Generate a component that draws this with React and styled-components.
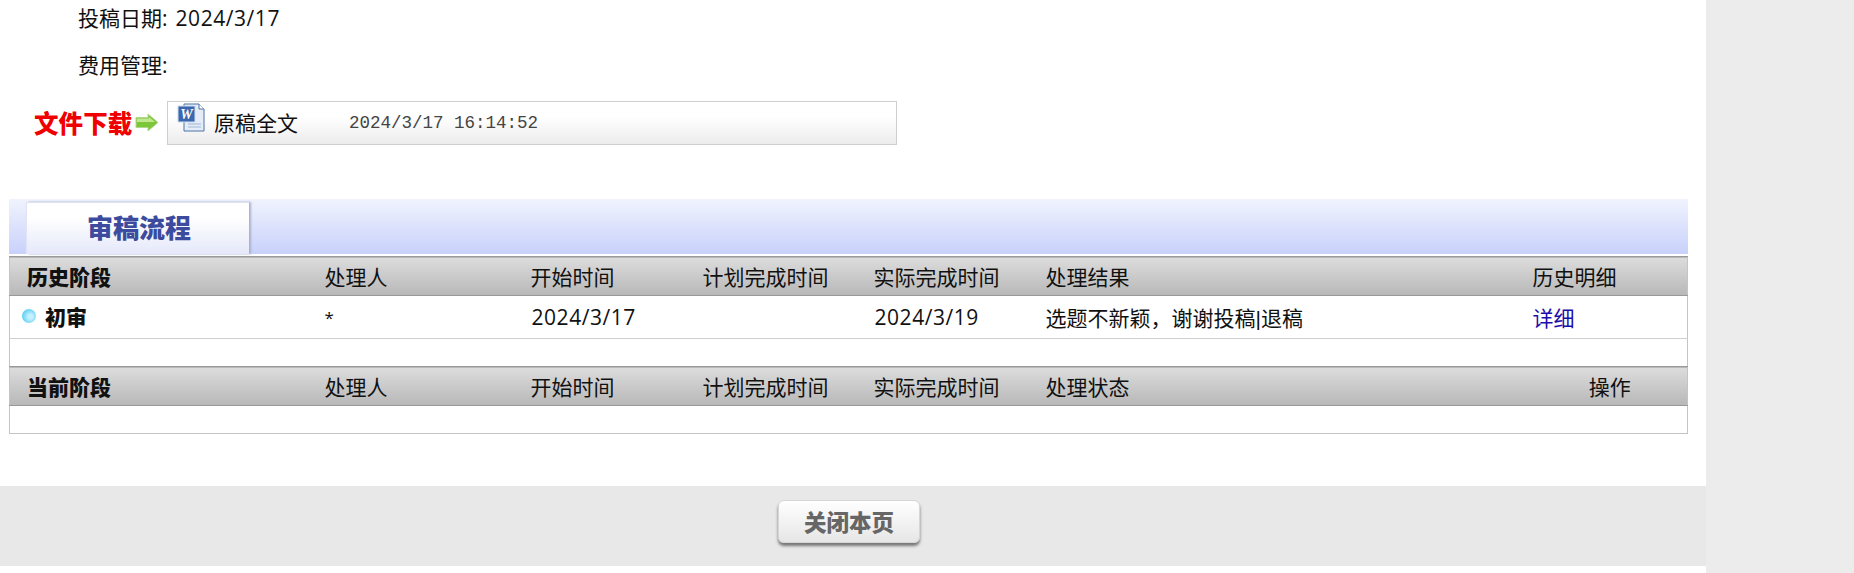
import React from "react";
import styled, { createGlobalStyle } from "styled-components";

const Global = createGlobalStyle`
  html, body { margin: 0; padding: 0; background: #fff; overflow: hidden; }
  body { font-family: "Open Sans", "Noto Sans CJK SC", sans-serif; font-size: 21px; color: #111; }
`;
const Page = styled.div`display: flex; width: 1854px; height: 573px;`;
const Main = styled.main`width: 1706px; flex: none; display: flex; flex-direction: column;`;
const Aside = styled.aside`flex: 1; background: #ececec;`;
const InfoList = styled.div`display: grid; row-gap: 11px; padding-left: 78px;`;
const InfoRow = styled.div`display: flex; align-items: center; height: 36px; gap: 8px; line-height: 36px;`;
const Value = styled.span`letter-spacing: 0.55px;`;
const FileRow = styled.div`display: flex; align-items: center; height: 43px; margin-top: 18px; padding-left: 34px;`;
const FileLabel = styled.span`font-size: 24.5px; font-weight: 900; color: #f00000; width: 101px; white-space: nowrap; letter-spacing: 0.1px;`;
const ArrowBox = styled.svg`width: 24px; height: 19px; flex: none; margin-right: 8px;`;
const FileBox = styled.div`
  display: flex; align-items: center; box-sizing: border-box; width: 730px; height: 44px; padding-left: 9px;
  border: 1px solid #cfcfcf; background: linear-gradient(#ffffff, #ffffff 35%, #ececec);
`;
const FileIcon = styled.svg`width: 29px; height: 29px; flex: none; margin: -10px 8px 0 0;`;
const FileName = styled.span`width: 135px; flex: none; margin-top: -2px;`;
const FileTime = styled.span`font-family: "Liberation Mono", monospace; font-size: 17.5px; color: #444;`;
const Section = styled.section`margin: 55px 18px 0 9px;`;
const Band = styled.div`
  height: 55px; display: flex; align-items: flex-end; padding-left: 18px;
  background: linear-gradient(#f0f3fd, #c8d1fb);
`;
const Tab = styled.div`
  box-sizing: border-box; width: 222px; height: 52px; padding: 0 0 4px 2px; display: flex; align-items: center; justify-content: center;
  background: linear-gradient(#ffffff, #ffffff 30%, #e4e8f9);
  border-top: 1px solid #dfe2ee; box-shadow: 2px 0 2px #a9b0cc, -1px 0 1px #dfe3f3;
  font-size: 26px; font-weight: 900; color: #3c4b9d;
`;
const Table = styled.table`
  width: 1678px; margin-top: 2px; table-layout: fixed; border-collapse: collapse;
  border-left: 1px solid #c4c4c4; border-right: 1px solid #c4c4c4; border-bottom: 1px solid #c4c4c4;
`;
const HeadRow = styled.tr`height: 39px; background: linear-gradient(#dcdcdc, #b8b8b8); border-top: 1px solid #999; border-bottom: 1px solid #999;`;
const DataRow = styled.tr`height: 43px; border-bottom: 1px solid #cfcfcf;`;
const BlankRow = styled.tr`height: ${p => p.$h}px;`;
const Th = styled.th`padding: 0 0 1px; font-weight: 400; text-align: ${p => p.$center ? "center" : "left"}; white-space: nowrap;`;
const StageTh = styled(Th)`padding-left: 17px; font-weight: 900;`;
const Td = styled.td`padding: 0; white-space: nowrap;`;
const Star = styled(Td)`font-size: 17px; vertical-align: middle;`;
const ResultCell = styled(Td)`font-family: "Liberation Sans", "Noto Sans CJK SC", sans-serif;`;
const StageCell = styled(Td)`padding: 0 0 2px 12px; font-weight: 900;`;
const StageInner = styled.span`display: flex; align-items: center; gap: 9px;`;
const Bullet = styled.i`
  width: 14px; height: 14px; border-radius: 50%; flex: none;
  background: radial-gradient(circle at 60% 55%, #c4f0ff 0 20%, #5fd2f3 70%, #8adff6);
`;
const Link = styled.a`color: #1a0dab; text-decoration: none;`;
const DateText = styled.span`letter-spacing: 0.55px; margin-left: 1px;`;
const Footer = styled.footer`height: 80px; margin-top: 52px; background: #e8e8e8; display: flex; align-items: center; justify-content: center;`;
const CloseButton = styled.button`
  width: 142px; height: 43px; margin: -10px 0 0 -8px; border: 1px solid #d6d6d6; border-radius: 6px; padding: 0;
  background: linear-gradient(#ffffff, #e6e6e6); box-shadow: 0 3px 3px #777;
  font: 900 22.5px "Noto Sans CJK SC", sans-serif; color: #666;
`;

const widths = [315, 206, 172, 171, 172, 487, 155];
const heads = ["处理人", "开始时间", "计划完成时间", "实际完成时间"];

const Arrow = () => (
  <ArrowBox viewBox="0 0 24 19">
    <path d="M1 4.5h12V1l10 8.5L13 18v-3.5H1z" fill="#7cc63a" stroke="#b3d68d" strokeWidth="1" />
    <path d="M2 5.5h12V4l6 5H2z" fill="#bfe88f" />
  </ArrowBox>
);
const WordIcon = () => (
  <FileIcon viewBox="0 0 29 29">
    <path d="M7 1h15l5 5v22H7z" fill="#e6ecf7" stroke="#4f74a6" />
    <path d="M22 1v5h5" fill="#fff" stroke="#4f74a6" />
    <path d="M11 21h13M11 24h13" stroke="#9db7d8" />
    <rect x="1" y="3" width="17" height="16" fill="#3a68ae" stroke="#cfdcf0" />
    <text x="9.5" y="16" fontSize="14" fontWeight="700" fontStyle="italic" textAnchor="middle" fill="#fff" fontFamily="Liberation Serif, serif">W</text>
  </FileIcon>
);

export default function App() {
  return (
    <Page>
      <Global />
      <Main>
        <InfoList>
          <InfoRow>投稿日期:<Value>2024/3/17</Value></InfoRow>
          <InfoRow>费用管理:</InfoRow>
        </InfoList>
        <FileRow>
          <FileLabel>文件下载</FileLabel>
          <Arrow />
          <FileBox>
            <WordIcon />
            <FileName>原稿全文</FileName>
            <FileTime>2024/3/17 16:14:52</FileTime>
          </FileBox>
        </FileRow>
        <Section>
          <Band><Tab>审稿流程</Tab></Band>
          <Table>
            <colgroup>{widths.map((w, i) => <col key={i} width={w} />)}</colgroup>
            <tbody>
              <HeadRow>
                <StageTh>历史阶段</StageTh>
                {heads.map(h => <Th key={h}>{h}</Th>)}
                <Th>处理结果</Th>
                <Th>历史明细</Th>
              </HeadRow>
              <DataRow>
                <StageCell><StageInner><Bullet />初审</StageInner></StageCell>
                <Star>*</Star>
                <Td><DateText>2024/3/17</DateText></Td>
                <Td />
                <Td><DateText>2024/3/19</DateText></Td>
                <ResultCell>选题不新颖，谢谢投稿|退稿</ResultCell>
                <Td><Link href="#">详细</Link></Td>
              </DataRow>
              <BlankRow $h={28}><Td colSpan={7} /></BlankRow>
              <HeadRow>
                <StageTh>当前阶段</StageTh>
                {heads.map(h => <Th key={h}>{h}</Th>)}
                <Th>处理状态</Th>
                <Th $center>操作</Th>
              </HeadRow>
              <BlankRow $h={28}><Td colSpan={7} /></BlankRow>
            </tbody>
          </Table>
        </Section>
        <Footer><CloseButton>关闭本页</CloseButton></Footer>
      </Main>
      <Aside />
    </Page>
  );
}
